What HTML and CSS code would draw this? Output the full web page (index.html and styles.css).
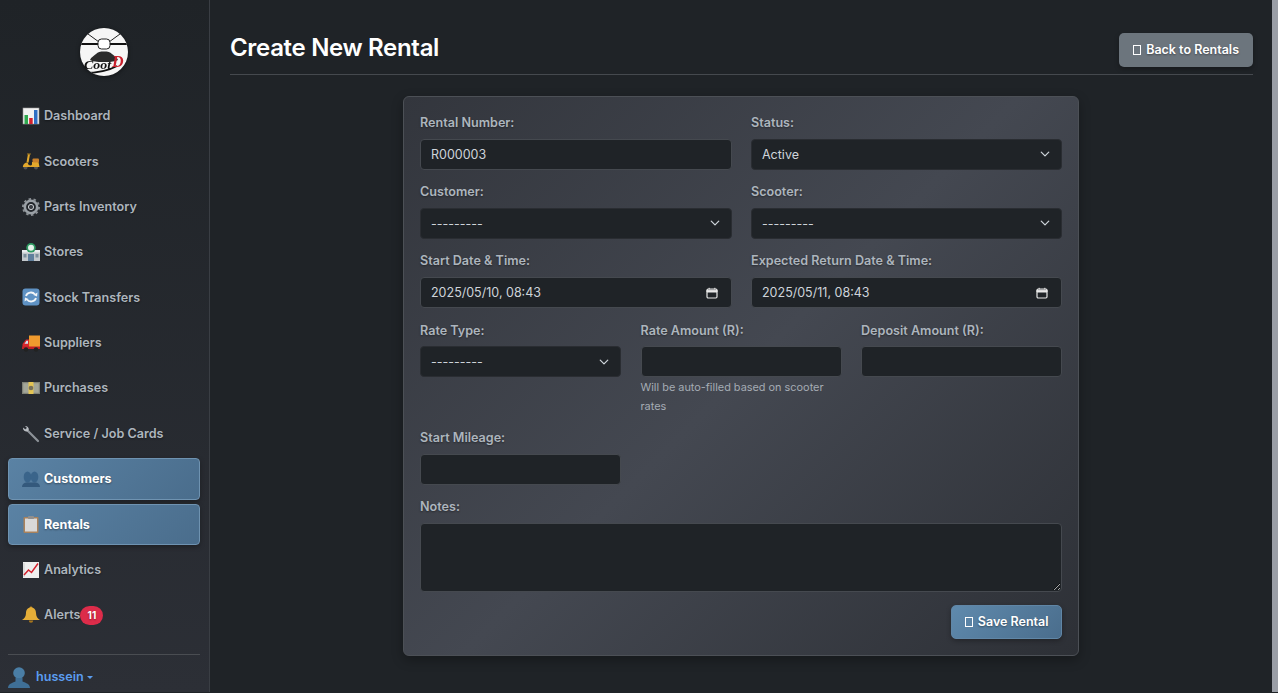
FILE: index.html
```html
<!DOCTYPE html>
<html lang="en">
<head>
  <meta charset="UTF-8">
  <meta name="viewport" content="width=device-width, initial-scale=1.0">
  <title>Create New Rental</title>
  <link rel="stylesheet" href="styles.css">
</head>
<body>

<div class="app">
  <aside class="sidebar">
    <div class="logo">
      <svg width="48" height="48" viewBox="0 0 48 48">
        <defs><clipPath id="logoClip"><circle cx="24" cy="24" r="24"/></clipPath></defs>
        <circle cx="24" cy="24" r="24" fill="#f6f6f6"/>
        <g clip-path="url(#logoClip)">
          <path d="M1 16h17M30 16h17" stroke="#111" stroke-width="2"/>
          <path d="M8 6l11 8M40 6l-11 8" stroke="#222" stroke-width="1"/>
          <rect x="18" y="11" width="12" height="10" rx="3.500" fill="#fff" stroke="#222" stroke-width="1"/>
          <path d="M10 32c1-3 4-4 6-6 2-2 4-2.500 8-2.500s6 .5 8 2.500c2 2 5 3 6 6-3 1.500-6 2-14 2s-11-.5-14-2z" fill="#2b2b2b"/>
          <path d="M4 45c12 0 24-2 33-7" stroke="#111" stroke-width="1.800" fill="none"/>
        </g>
        <text x="4" y="41" textLength="27" lengthAdjust="spacingAndGlyphs" class="logo-word">Coot</text>
        <text x="32" y="39" class="logo-mark">D</text>
      </svg>
    </div>

    <nav class="nav">
      <a class="nav-item" href="#">
        <svg class="ico" viewBox="0 0 18 18"><rect x="1" y="1" width="16" height="16" fill="#f2f2f2"/><rect x="1" y="1" width="16" height="16" fill="none" stroke="#9a9a9a" stroke-width=".6"/><rect x="2.500" y="8" width="3.500" height="9" fill="#2fa84f"/><rect x="7.200" y="11" width="3.500" height="6" fill="#d3212d"/><rect x="12" y="3" width="3.500" height="14" fill="#2f6fc4"/></svg>
        Dashboard
      </a>
      <a class="nav-item" href="#">
        <svg class="ico" viewBox="0 0 18 18"><circle cx="3.500" cy="15.500" r="2" fill="#555"/><circle cx="14" cy="15.500" r="2" fill="#555"/><path d="M7 2L5.500 10.500" stroke="#e3a92c" stroke-width="2" fill="none"/><path d="M5 2h4" stroke="#8a6a22" stroke-width="1.200"/><path d="M.8 15c.3-2.800 2-4.500 4.700-4.500l1 2.200c1.500 1 3 1 3.500-.2V10h6.500l1 5z" fill="#e3a92c"/><rect x="10.500" y="6.500" width="6.500" height="4" rx="1" fill="#c9812c"/></svg>
        Scooters
      </a>
      <a class="nav-item" href="#">
        <svg class="ico" viewBox="0 0 18 18"><circle cx="9" cy="9" r="6.200" fill="none" stroke="#9aa0a6" stroke-width="2.600"/><circle cx="9" cy="9" r="8" fill="none" stroke="#8b9095" stroke-width="2" stroke-dasharray="2.500 2.500"/><circle cx="9" cy="9" r="2.600" fill="#3b3e44" stroke="#c9cdd1" stroke-width="1"/></svg>
        Parts Inventory
      </a>
      <a class="nav-item" href="#">
        <svg class="ico" viewBox="0 0 18 18"><rect x="0" y="8" width="18" height="10" fill="#c3c8cc"/><rect x="0" y="7" width="18" height="2.500" fill="#e9ecee"/><rect x="6" y="11" width="6" height="7" fill="#5f7f9c"/><rect x="1.500" y="11" width="3" height="3.500" fill="#7d8f9c"/><rect x="13.500" y="11" width="3" height="3.500" fill="#7d8f9c"/><circle cx="9" cy="4.800" r="4.800" fill="#2e9a62"/><circle cx="9" cy="4.800" r="3" fill="#e8f2ec"/></svg>
        Stores
      </a>
      <a class="nav-item" href="#">
        <svg class="ico" viewBox="0 0 18 18"><rect x=".5" y=".5" width="17" height="17" rx="3" fill="#5f92c4"/><path d="M4 8a5 4.500 0 0 1 9-1.500M14 10a5 4.500 0 0 1-9 1.500" fill="none" stroke="#f2f5f8" stroke-width="1.800"/><path d="M15.500 4.500l-.5 4-3.500-1.500zM2.500 13.500l.5-4 3.500 1.500z" fill="#f2f5f8"/></svg>
        Stock Transfers
      </a>
      <a class="nav-item" href="#">
        <svg class="ico" viewBox="0 0 18 18"><rect x="7" y="1.500" width="11" height="11.500" fill="#ef9a2e"/><path d="M7 5.500H4L.5 10v4h6.500z" fill="#d8262c"/><path d="M4.500 6.800H6v3H2.500z" fill="#cfe3f2"/><rect x="0" y="12.500" width="18" height="2.500" fill="#c32026"/><circle cx="4" cy="15.500" r="2.200" fill="#222"/><circle cx="14" cy="15.500" r="2.200" fill="#222"/></svg>
        Suppliers
      </a>
      <a class="nav-item" href="#">
        <svg class="ico" viewBox="0 0 18 18"><rect x="0" y="3" width="18" height="12" fill="#7f8278"/><rect x="1.200" y="4.200" width="15.600" height="9.600" fill="#a3a699"/><rect x="6.500" y="3" width="5" height="12" fill="#e3c454"/><circle cx="9" cy="9" r="2.300" fill="#77705a"/></svg>
        Purchases
      </a>
      <a class="nav-item" href="#">
        <svg class="ico" viewBox="0 0 18 18"><path d="M4.500 4.500L16 16" stroke="#8d9298" stroke-width="2.200" stroke-linecap="round"/><path d="M1 2.500a3.500 3.500 0 0 0 4.800 3.800L6.800 4.800A3.500 3.500 0 0 0 3 1l2 2-1.500 1.500z" fill="#b8bcc1"/></svg>
        Service / Job Cards
      </a>
      <a class="nav-item active" href="#">
        <svg class="ico" viewBox="0 0 18 18"><ellipse cx="5.500" cy="7" rx="3.800" ry="5.500" fill="#3a648a"/><ellipse cx="12.500" cy="7" rx="3.800" ry="5.500" fill="#3a648a"/><path d="M0 17c0-3 2-4.500 5-4.500h8c3 0 5 1.500 5 4.500z" fill="#34597c"/></svg>
        Customers
      </a>
      <a class="nav-item active" href="#">
        <svg class="ico" viewBox="0 0 18 18"><rect x="1.500" y="2" width="15" height="16" rx="1" fill="#a9825c"/><rect x="3" y="3.500" width="12" height="13" fill="#d9d9d9"/><rect x="6" y="1" width="6" height="3" rx=".8" fill="#8f8f8f"/></svg>
        Rentals
      </a>
      <a class="nav-item" href="#">
        <svg class="ico" viewBox="0 0 18 18"><rect x="1" y="1" width="16" height="16" fill="#efefef"/><path d="M2 16V2" stroke="#b5b5b5" stroke-width=".6"/><path d="M2 14l4.500-5 3 2.500L16 2.500" fill="none" stroke="#d3212d" stroke-width="1.500"/></svg>
        Analytics
      </a>
      <a class="nav-item" href="#">
        <svg class="ico" viewBox="0 0 18 18"><circle cx="9" cy="1.800" r="1.300" fill="#c98f22"/><path d="M9 1.500c-3.500 0-5 2.500-5 5.500 0 3.500-1.500 5.500-4 7h18c-2.500-1.500-4-3.500-4-7 0-3-1.500-5.500-5-5.500z" fill="#e5ae38"/><path d="M6.800 14.500a2.200 2.200 0 0 0 4.400 0z" fill="#a8761c"/></svg>
        Alerts<span class="badge">11</span>
      </a>
    </nav>

    <div class="user">
      <svg class="user-ico" viewBox="0 0 22 22"><circle cx="11" cy="7" r="5.800" fill="#4a7ea6"/><path d="M0 22c0-4 4-5 7.500-6.500V12h7v3.500C18 17 22 18 22 22z" fill="#3f6f96"/></svg>
      <span class="user-name">hussein</span>
      <span class="caret"></span>
    </div>
  </aside>

  <main class="main">
    <header class="page-head">
      <h1>Create New Rental</h1>
      <a class="btn btn-back" href="#"><span class="tofu"></span>Back to Rentals</a>
    </header>

    <form class="card">
      <div class="row two">
        <div class="field">
          <label for="rentalNumber">Rental Number:</label>
          <input id="rentalNumber" type="text" value="R000003">
        </div>
        <div class="field">
          <label for="status">Status:</label>
          <select id="status"><option>Active</option></select>
        </div>
      </div>

      <div class="row two">
        <div class="field">
          <label for="customer">Customer:</label>
          <select id="customer"><option>---------</option></select>
        </div>
        <div class="field">
          <label for="scooter">Scooter:</label>
          <select id="scooter"><option>---------</option></select>
        </div>
      </div>

      <div class="row two">
        <div class="field">
          <label for="startDate">Start Date &amp; Time:</label>
          <input id="startDate" class="date" type="text" value="2025/05/10, 08:43">
        </div>
        <div class="field">
          <label for="returnDate">Expected Return Date &amp; Time:</label>
          <input id="returnDate" class="date" type="text" value="2025/05/11, 08:43">
        </div>
      </div>

      <div class="row three">
        <div class="field">
          <label for="rateType">Rate Type:</label>
          <select id="rateType"><option>---------</option></select>
        </div>
        <div class="field">
          <label for="rateAmount">Rate Amount (R):</label>
          <input id="rateAmount" type="text">
          <small class="help">Will be auto-filled based on scooter rates</small>
        </div>
        <div class="field">
          <label for="deposit">Deposit Amount (R):</label>
          <input id="deposit" type="text">
        </div>
      </div>

      <div class="row three">
        <div class="field">
          <label for="mileage">Start Mileage:</label>
          <input id="mileage" type="text">
        </div>
      </div>

      <div class="field notes">
        <label for="notes">Notes:</label>
        <textarea id="notes"></textarea>
      </div>

      <div class="actions">
        <button class="btn btn-save" type="button"><span class="tofu"></span>Save Rental</button>
      </div>
    </form>
  </main>

  <div class="edge"></div>
</div>

</body>
</html>
```

FILE: styles.css
```css
* {
  box-sizing: border-box;
}

html, body {
  height: 100%;
  margin: 0;
  overflow: hidden;
}

body {
  font-family: Inter, "Liberation Sans", sans-serif;
  font-size: 12.600px;
  line-height: 19.500px;
  background: #1f2327;
  color: #dee2e6;
}

.app {
  display: flex;
  height: 692px;
}

/* sidebar */
.sidebar {
  width: 210px;
  flex: none;
  display: flex;
  flex-direction: column;
  padding: 0 9px 0 8px;
  background: linear-gradient(180deg, #1f2327 0%, #2c2f36 100%);
  border-right: 1px solid #3a3e44;
}

.logo {
  display: flex;
  justify-content: center;
  padding-top: 28px;
  height: 95.200px;
}

.logo svg {
  filter: drop-shadow(0 1px 2px rgba(0, 0, 0, 0.5));
}

.logo-word {
  font-family: "Liberation Serif", serif;
  font-style: italic;
  font-weight: 700;
  font-size: 12px;
  fill: #111;
}

.logo-mark {
  font-family: "Liberation Serif", serif;
  font-style: italic;
  font-weight: 700;
  font-size: 16px;
  fill: #c8202c;
}

.nav {
  display: flex;
  flex-direction: column;
  gap: 4px;
}

.nav-item {
  display: flex;
  align-items: center;
  height: 41.400px;
  padding: 0 13px;
  border: 1px solid transparent;
  border-radius: 4px;
  color: #adb5bd;
  font-weight: 600;
  text-decoration: none;
  text-shadow: 0 1px 2px rgba(0, 0, 0, 0.4);
}

.nav-item.active {
  color: #fff;
  font-weight: 700;
  background: linear-gradient(135deg, #5a82a4 0%, #4a6d8c 100%);
  border-color: #6f93b1;
  box-shadow: 0 2px 5px rgba(0, 0, 0, 0.3);
}

.ico {
  width: 18px;
  height: 18px;
  flex: none;
  margin-right: 4px;
}

.badge {
  display: inline-block;
  width: 23px;
  height: 19px;
  border-radius: 10px;
  background: #dd2c4a;
  color: #fff;
  font-size: 10px;
  font-weight: 700;
  line-height: 19px;
  text-align: center;
}

.user {
  display: flex;
  align-items: center;
  margin-top: auto;
  height: 38px;
  padding-top: 6px;
  border-top: 1px solid #4a4d52;
}

.user-ico {
  width: 22px;
  height: 22px;
  margin-right: 6px;
}

.user-name {
  color: #5b9df0;
  font-weight: 600;
}

.caret {
  margin-left: 3px;
  margin-top: 2px;
  border-top: 3px solid #5b9df0;
  border-left: 3px solid transparent;
  border-right: 3px solid transparent;
}

/* main */
.main {
  flex: 1;
  min-width: 0;
  padding: 0 19px 0 20px;
}

.page-head {
  display: flex;
  justify-content: space-between;
  align-items: flex-start;
  padding: 33px 0 7px;
  margin-bottom: 21px;
  border-bottom: 1px solid #45494e;
}

h1 {
  margin: 0;
  font-size: 24px;
  font-weight: 600;
  line-height: 29px;
  letter-spacing: -0.320px;
  color: #fff;
}

.btn {
  display: inline-flex;
  align-items: center;
  height: 34px;
  border: 0;
  border-radius: 5px;
  font-family: inherit;
  font-size: 12.500px;
  font-weight: 600;
  color: #fff;
  text-decoration: none;
  text-shadow: 0 1px 2px rgba(0, 0, 0, 0.4);
  box-shadow: 0 2px 5px rgba(0, 0, 0, 0.3);
}

.btn-back {
  padding: 0 14px;
  background: #6c757d;
}

.btn-save {
  padding: 0 12.500px;
  background: linear-gradient(135deg, #5f8aad 0%, #4a6d8c 100%);
  border: 1px solid #6086a6;
}

.tofu {
  display: inline-block;
  width: 8px;
  height: 10px;
  margin-right: 5px;
  border: 1px solid #fff;
}

.card {
  width: 676px;
  margin-left: 173px;
  padding: 16.100px 16px 16px;
  border: 1px solid #4c5056;
  border-radius: 6px;
  background: linear-gradient(135deg, #33363d 0%, #444851 50%, #2d3036 100%);
  box-shadow: 0 4px 12px rgba(0, 0, 0, 0.3);
}

.row {
  display: grid;
}

.row.two {
  grid-template-columns: 312px 1fr;
  column-gap: 19px;
}

.row.three {
  grid-template-columns: 1fr 1fr 1fr;
  column-gap: 19.500px;
}

.field {
  margin-bottom: 12.500px;
  min-width: 0;
}

label {
  display: block;
  margin-bottom: 6.200px;
  color: #adb5bd;
  font-weight: 600;
  text-shadow: 0 1px 2px rgba(0, 0, 0, 0.4);
}

input, select, textarea {
  display: block;
  width: 100%;
  height: 31px;
  padding: 0 10px;
  border: 1px solid #45494f;
  border-radius: 4px;
  background-color: #1f2327;
  color: #ced4da;
  font-family: inherit;
  font-size: 12.500px;
  outline: none;
}

select {
  appearance: none;
  border-color: #2a2d32;
  background-image: url("data:image/svg+xml,%3csvg xmlns='http://www.w3.org/2000/svg' viewBox='0 0 16 16'%3e%3cpath fill='none' stroke='%23ced4da' stroke-linecap='round' stroke-linejoin='round' stroke-width='2' d='M2 5l6 6 6-6'/%3e%3c/svg%3e");
  background-repeat: no-repeat;
  background-position: right 11px center;
  background-size: 10px 10px;
}

.date {
  background-image: url("data:image/svg+xml,%3csvg xmlns='http://www.w3.org/2000/svg' viewBox='0 0 12 12'%3e%3crect x='1' y='2' width='10' height='9' rx='1.200' fill='none' stroke='%23e8e8e8' stroke-width='1.200'/%3e%3cpath d='M1 3.200h10v1.800H1zM3.200 .8v1.500M8.800 .8v1.500' fill='%23e8e8e8' stroke='%23e8e8e8'/%3e%3c/svg%3e");
  background-repeat: no-repeat;
  background-position: right 13px center;
  background-size: 12px 12px;
}

.help {
  display: block;
  margin-top: 0.600px;
  color: #a5acb4;
  font-size: 10.900px;
  line-height: 18.700px;
}

.notes {
  margin-bottom: 13px;
}

textarea {
  height: 69px;
  padding: 6px 10px;
  resize: vertical;
}

.actions {
  display: flex;
  justify-content: flex-end;
}

/* window edge on the right */
.edge {
  width: 6px;
  flex: none;
  background: #9a9ea6;
}
```
